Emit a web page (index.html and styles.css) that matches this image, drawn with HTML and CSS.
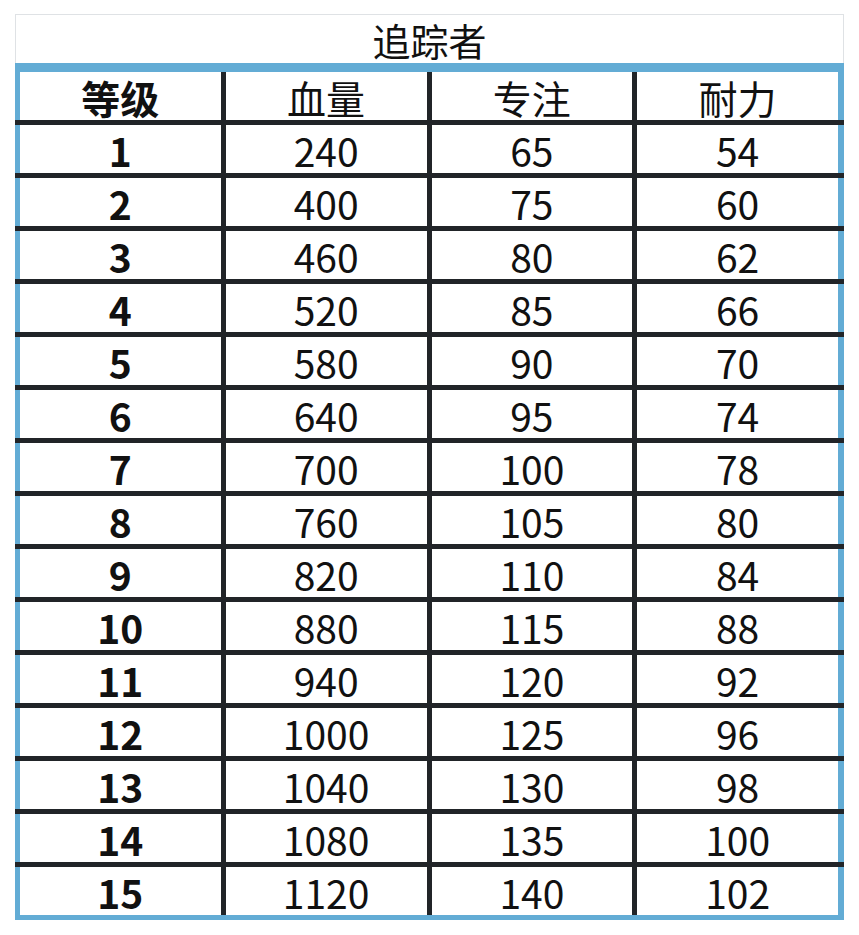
FILE: index.html
```html
<!DOCTYPE html>
<html lang="zh">
<head>
<meta charset="utf-8">
<link rel="stylesheet" href="styles.css">
</head>
<body>
<div class="wrap">
  <div class="title">追踪者</div>
  <div class="table">
    <div class="row head"><div class="cell first">等级</div><div class="cell">血量</div><div class="cell">专注</div><div class="cell">耐力</div></div>
    <div class="sep"></div>
    <div class="row"><div class="cell first">1</div><div class="cell">240</div><div class="cell">65</div><div class="cell">54</div></div>
    <div class="sep"></div>
    <div class="row"><div class="cell first">2</div><div class="cell">400</div><div class="cell">75</div><div class="cell">60</div></div>
    <div class="sep"></div>
    <div class="row"><div class="cell first">3</div><div class="cell">460</div><div class="cell">80</div><div class="cell">62</div></div>
    <div class="sep"></div>
    <div class="row"><div class="cell first">4</div><div class="cell">520</div><div class="cell">85</div><div class="cell">66</div></div>
    <div class="sep"></div>
    <div class="row"><div class="cell first">5</div><div class="cell">580</div><div class="cell">90</div><div class="cell">70</div></div>
    <div class="sep"></div>
    <div class="row"><div class="cell first">6</div><div class="cell">640</div><div class="cell">95</div><div class="cell">74</div></div>
    <div class="sep"></div>
    <div class="row"><div class="cell first">7</div><div class="cell">700</div><div class="cell">100</div><div class="cell">78</div></div>
    <div class="sep"></div>
    <div class="row"><div class="cell first">8</div><div class="cell">760</div><div class="cell">105</div><div class="cell">80</div></div>
    <div class="sep"></div>
    <div class="row"><div class="cell first">9</div><div class="cell">820</div><div class="cell">110</div><div class="cell">84</div></div>
    <div class="sep"></div>
    <div class="row"><div class="cell first">10</div><div class="cell">880</div><div class="cell">115</div><div class="cell">88</div></div>
    <div class="sep"></div>
    <div class="row"><div class="cell first">11</div><div class="cell">940</div><div class="cell">120</div><div class="cell">92</div></div>
    <div class="sep"></div>
    <div class="row"><div class="cell first">12</div><div class="cell">1000</div><div class="cell">125</div><div class="cell">96</div></div>
    <div class="sep"></div>
    <div class="row"><div class="cell first">13</div><div class="cell">1040</div><div class="cell">130</div><div class="cell">98</div></div>
    <div class="sep"></div>
    <div class="row"><div class="cell first">14</div><div class="cell">1080</div><div class="cell">135</div><div class="cell">100</div></div>
    <div class="sep"></div>
    <div class="row"><div class="cell first">15</div><div class="cell">1120</div><div class="cell">140</div><div class="cell">102</div></div>
  </div>
</div>
</body>
</html>
```

FILE: styles.css
```css
html, body {
  margin: 0;
  padding: 0;
  background: #ffffff;
}
body {
  font-family: "Noto Sans CJK SC", "Noto Sans", sans-serif;
  color: #111111;
}
.wrap {
  margin: 14px 0 0 15px;
  width: 829px;
}
.title {
  box-sizing: border-box;
  height: 49px;
  padding-top: 2px;
  border: 1px solid #dfe2e5;
  border-bottom: none;
  text-align: center;
  font-size: 38px;
  line-height: 46px;
  font-weight: 400;
}
.table {
  border-top: 9px solid #63acd5;
  border-bottom: 5px solid #63acd5;
}
.row {
  display: grid;
  grid-template-columns: repeat(4, 1fr);
  column-gap: 5px;
  background: #212428;
  border-left: 5px solid #63acd5;
  border-right: 6px solid #63acd5;
}
.cell {
  box-sizing: border-box;
  background: #ffffff;
  height: 48px;
  padding-top: 2px;
  line-height: 46px;
  text-align: center;
  font-size: 39px;
  font-weight: 400;
}
.first {
  font-weight: 700;
}
.sep {
  height: 5px;
  background: #212428;
}
```
